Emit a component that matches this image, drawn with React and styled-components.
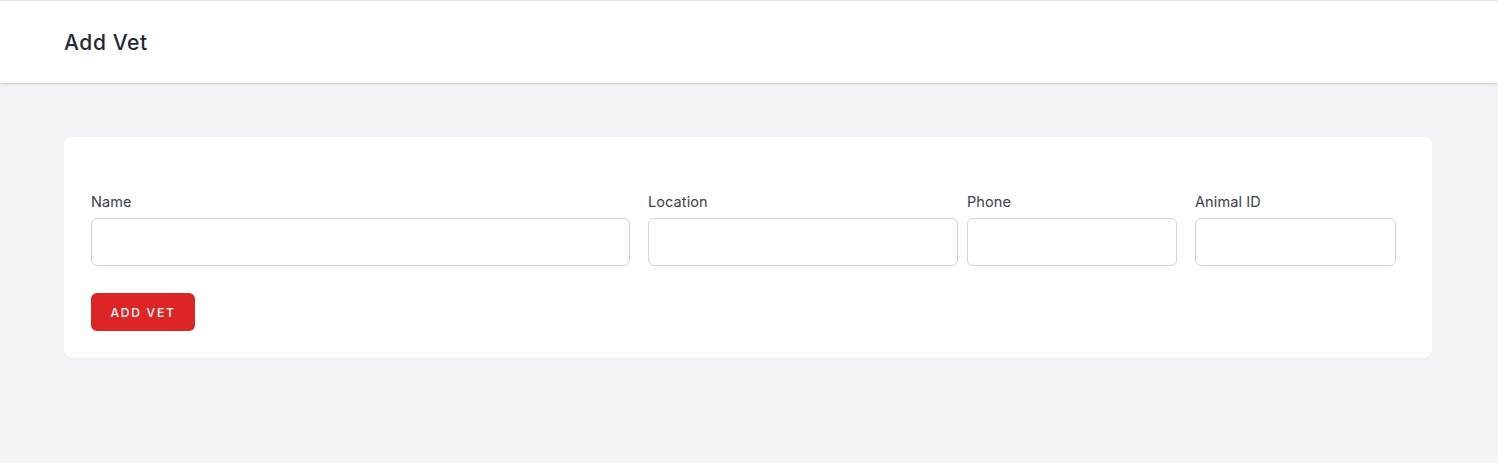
import styled, { createGlobalStyle } from "styled-components";

const GlobalStyle = createGlobalStyle`
  html, body {
    margin: 0;
    padding: 0;
    background: #f3f4f6;
    font-family: Inter, "Noto Sans", sans-serif;
    color: #1f2937;
  }
  * { box-sizing: border-box; }
`;

const Page = styled.div`
  min-height: 463px;
  background: #f3f4f6;
`;

const Header = styled.header`
  height: 83px;
  background: #fff;
  border-top: 1px solid #e5e7eb;
  box-shadow: 0 1px 3px rgba(0, 0, 0, 0.12), 0 1px 2px rgba(0, 0, 0, 0.06);
  display: flex;
  align-items: center;
  padding: 2px 64px 0;
`;

const Title = styled.h1`
  margin: 0;
  font-size: 21px;
  font-weight: 500;
  line-height: 28px;
  color: #1f2937;
  letter-spacing: 0.6px;
`;

const Main = styled.main`
  padding: 54px 66px 0 64px;
`;

const Card = styled.section`
  background: #fff;
  border-radius: 8px;
  box-shadow: 0 1px 2px rgba(0, 0, 0, 0.04);
  padding: 54px 27px 27px;
`;

const Row = styled.div`
  display: flex;
`;

const Field = styled.label`
  display: flex;
  flex-direction: column;
  width: ${(p) => p.$width}px;
  margin-left: ${(p) => p.$gap || 0}px;
`;

const Label = styled.span`
  font-size: 14.5px;
  line-height: 20px;
  padding-top: 1px;
  color: #374151;
  margin-bottom: 6px;
  letter-spacing: 0.1px;
`;

const Input = styled.input`
  height: 48px;
  width: 100%;
  border: 1px solid #d1d5db;
  border-radius: 6px;
  background: #fff;
  font: inherit;
  padding: 0 12px;
  outline: none;
`;

const Button = styled.button`
  margin-top: 27px;
  width: 104px;
  height: 38px;
  border: none;
  border-radius: 6px;
  background: #dc2626;
  color: #fff;
  font-family: Inter, "Noto Sans", sans-serif;
  font-size: 12px;
  font-weight: 500;
  letter-spacing: 1.8px;
  text-transform: uppercase;
  cursor: pointer;
`;

const fields = [
  { label: "Name", width: 539 },
  { label: "Location", width: 310, gap: 18 },
  { label: "Phone", width: 210, gap: 9 },
  { label: "Animal ID", width: 201, gap: 18 },
];

export default function App() {
  return (
    <Page>
      <GlobalStyle />
      <Header>
        <Title>Add Vet</Title>
      </Header>
      <Main>
        <Card>
          <Row>
            {fields.map((f) => (
              <Field key={f.label} $width={f.width} $gap={f.gap}>
                <Label>{f.label}</Label>
                <Input type="text" />
              </Field>
            ))}
          </Row>
          <Button>Add Vet</Button>
        </Card>
      </Main>
    </Page>
  );
}
